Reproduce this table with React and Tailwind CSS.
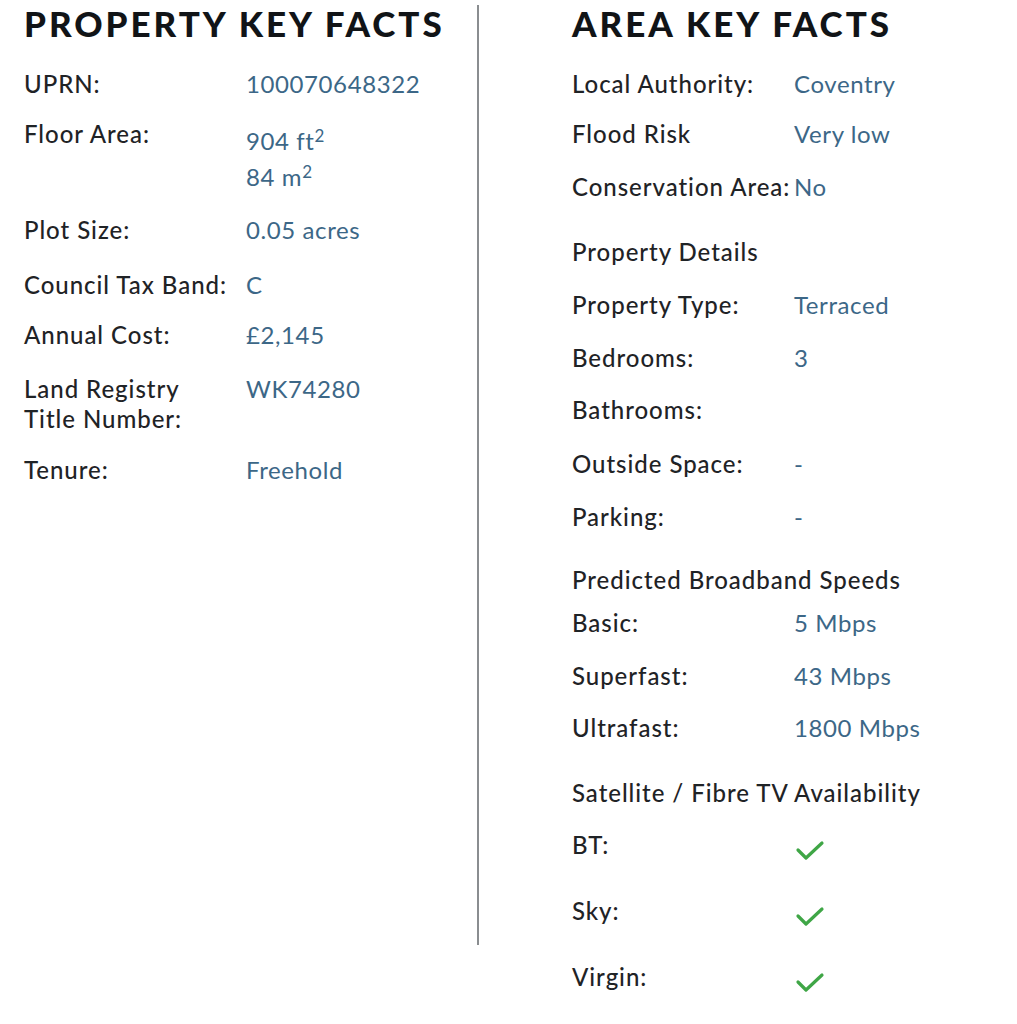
import React from "react";

const font = { fontFamily: "Lato, 'Noto Sans', sans-serif" };

const propertyRows = [
  { label: "UPRN:", value: "100070648322", h: "h-[50px]" },
  { label: "Floor Area:", value: "floor", h: "h-[96px]" },
  { label: "Plot Size:", value: "0.05 acres", h: "h-[55px]" },
  { label: "Council Tax Band:", value: "C", h: "h-[50px]" },
  { label: "Annual Cost:", value: "£2,145", h: "h-[54px]" },
  { label: "land", value: "WK74280", h: "h-[81px]" },
  { label: "Tenure:", value: "Freehold", h: "h-[50px]" },
];

const areaRows = [
  { label: "Local Authority:", value: "Coventry", h: "h-[50px]" },
  { label: "Flood Risk", value: "Very low", h: "h-[53px]" },
  { label: "Conservation Area:", value: "No", h: "h-[65px]" },
  { label: "Property Details", heading: true, h: "h-[53px]" },
  { label: "Property Type:", value: "Terraced", h: "h-[53px]" },
  { label: "Bedrooms:", value: "3", h: "h-[52px]" },
  { label: "Bathrooms:", value: "", h: "h-[54px]" },
  { label: "Outside Space:", value: "-", h: "h-[53px]" },
  { label: "Parking:", value: "-", h: "h-[63px]" },
  { label: "Predicted Broadband Speeds", heading: true, h: "h-[43px]" },
  { label: "Basic:", value: "5 Mbps", h: "h-[53px]" },
  { label: "Superfast:", value: "43 Mbps", h: "h-[52px]" },
  { label: "Ultrafast:", value: "1800 Mbps", h: "h-[65px]" },
  { label: "Satellite / Fibre TV Availability", heading: true, h: "h-[52px]" },
  { label: "BT:", check: true, h: "h-[66px]" },
  { label: "Sky:", check: true, h: "h-[66px]" },
  { label: "Virgin:", check: true, h: "h-[60px]" },
];

const Check = () => (
  <svg width="30" height="24" viewBox="0 0 30 24" className="mt-[8px] ml-[1px]">
    <path d="M3 12 L11 20 L27 5" fill="none" stroke="#3fa646" strokeWidth="3.2" strokeLinecap="round" strokeLinejoin="round" />
  </svg>
);

const Label = ({ children }) => (
  <div className="w-[222px] shrink-0 text-[24px] leading-[30px] font-medium tracking-[0.04em] text-[#1f2326] whitespace-nowrap">
    {children}
  </div>
);

const Value = ({ children }) => (
  <div className="text-[24px] leading-[30px] tracking-[0.025em] text-[#3c6787] whitespace-nowrap">{children}</div>
);

const Title = ({ children }) => (
  <h2 className="text-[35px] leading-[46px] font-black tracking-[0.085em] text-[#111417] whitespace-nowrap">
    {children}
  </h2>
);

export default function App() {
  return (
    <div className="w-[1017px] h-[1024px] bg-white flex overflow-hidden" style={font}>
      <div className="w-[477px] shrink-0 pl-[24px]">
        <Title>PROPERTY KEY FACTS</Title>
        <div className="mt-[23px] flex flex-col">
          {propertyRows.map((r) => (
            <div key={r.label} className={`flex items-start ${r.h}`}>
              {r.label === "land" ? (
                <Label>
                  Land Registry
                  <br />
                  Title Number:
                </Label>
              ) : (
                <Label>{r.label}</Label>
              )}
              {r.value === "floor" ? (
                <div className="mt-[4px] text-[24px] leading-[36px] tracking-[0.025em] text-[#3c6787]">
                  <div>
                    904 ft<sup className="text-[17px]">2</sup>
                  </div>
                  <div>
                    84 m<sup className="text-[17px]">2</sup>
                  </div>
                </div>
              ) : (
                <Value>{r.value}</Value>
              )}
            </div>
          ))}
        </div>
      </div>
      <div className="w-[2px] h-[940px] mt-[5px] bg-[#8a8d90] shrink-0" />
      <div className="pl-[93px]">
        <Title>AREA KEY FACTS</Title>
        <div className="mt-[23px] flex flex-col">
          {areaRows.map((r) => (
            <div key={r.label} className={`flex items-start ${r.h}`}>
              {r.heading ? (
                <div className="text-[24px] leading-[30px] font-medium tracking-[0.04em] text-[#1f2326] whitespace-nowrap">
                  {r.label}
                </div>
              ) : (
                <>
                  <Label>{r.label}</Label>
                  {r.check ? <Check /> : <Value>{r.value}</Value>}
                </>
              )}
            </div>
          ))}
        </div>
      </div>
    </div>
  );
}
